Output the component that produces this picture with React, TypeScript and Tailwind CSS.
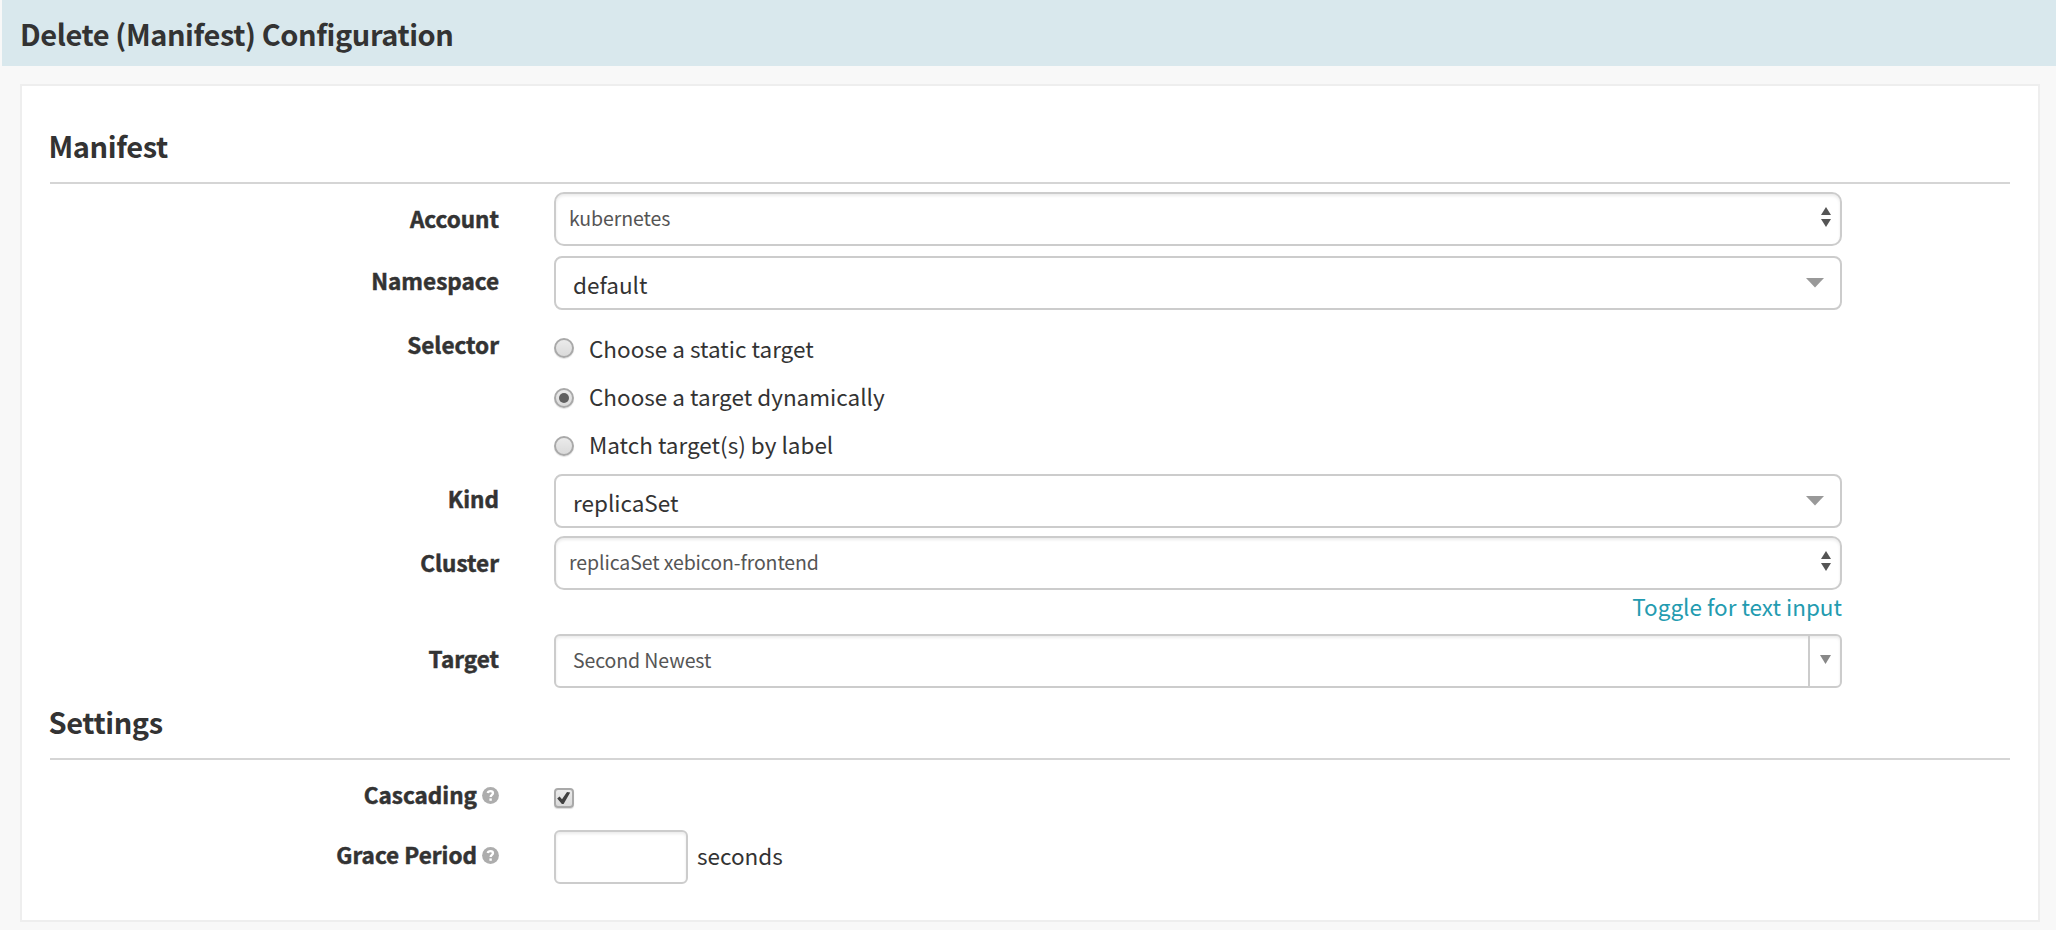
import type { ReactNode } from "react";

function SectionTitle({ children }: { children: ReactNode }) {
  return (
    <h2 className="h-[60px] border-b-2 border-[#d5d5d5] indent-[-1.5px] text-[29px] leading-[42px] font-bold tracking-[-0.4px]">
      {children}
    </h2>
  );
}

function HelpIcon() {
  return (
    <svg className="mt-[3px] ml-[5px] h-[17px] w-[17px] shrink-0" viewBox="0 0 17 17" aria-hidden="true">
      <circle cx="8.5" cy="8.5" r="8.4" fill="#adadad" />
      <path
        d="M5.7 6.1C6 4.8 7 4.2 8.5 4.2c1.6 0 2.5.8 2.5 2 0 1.7-2.4 1.8-2.4 3.9"
        fill="none"
        stroke="#fff"
        strokeWidth="2.3"
      />
      <rect x="7.4" y="11.4" width="2.4" height="2.4" fill="#fff" />
    </svg>
  );
}

function Label({ children, help, offset }: { children: ReactNode; help?: boolean; offset: string }) {
  return (
    <div
      className={`flex w-[449px] shrink-0 items-center justify-end text-[22.5px] leading-[30px] font-bold ${offset}`}
    >
      <span className="[-webkit-text-stroke:0.5px_#333]">{children}</span>
      {help && <HelpIcon />}
    </div>
  );
}

function Row({ label, help, offset = "pt-[9px]", className = "", children }: {
  label: string;
  help?: boolean;
  offset?: string;
  className?: string;
  children: ReactNode;
}) {
  return (
    <div className={`flex items-start ${className}`}>
      <Label help={help} offset={offset}>{label}</Label>
      <div className="ml-[55px] w-[1288px]">{children}</div>
    </div>
  );
}

function NativeSelect({ value }: { value: string }) {
  return (
    <div className="flex h-[54px] items-start justify-between rounded-[10px] border-2 border-[#ccc] bg-white pl-[13px] shadow-[inset_0_2px_3px_rgba(0,0,0,0.08)]">
      <span className="pt-[10px] text-[19.5px] leading-[28px] tracking-[-0.1px] text-[#555]">{value}</span>
      <svg className="mt-[13px] mr-[9px] h-[20px] w-[10px]" viewBox="0 0 10 20" fill="#555">
        <path d="M5 0l5 8H0zM5 20l5-8H0z" />
      </svg>
    </div>
  );
}

function SearchSelect({ value }: { value: string }) {
  return (
    <div className="flex h-[54px] items-start justify-between rounded-[8px] border-2 border-[#ccc] bg-white pl-[17px]">
      <span className="pt-[11px] text-[22.5px] leading-[30px]">{value}</span>
      <svg className="mt-[20px] mr-[16px] h-[10px] w-[18px]" viewBox="0 0 18 10" fill="#999">
        <path d="M0 0h18L9 9.5z" />
      </svg>
    </div>
  );
}

function ComboSelect({ value }: { value: string }) {
  return (
    <div className="flex h-[54px] items-stretch justify-between rounded-[6px] border-2 border-[#ccc] bg-white pl-[17px] shadow-[inset_0_2px_3px_rgba(0,0,0,0.08)]">
      <span className="pt-[10px] text-[19.5px] leading-[28px] tracking-[-0.1px] text-[#555]">{value}</span>
      <span className="flex w-[32px] justify-center border-l-2 border-[#ccc] pt-[19px]">
        <svg className="h-[9px] w-[11px]" viewBox="0 0 11 9" fill="#888">
          <path d="M0 0h11L5.5 9z" />
        </svg>
      </span>
    </div>
  );
}

function Radio({ label, checked, offset }: { label: string; checked?: boolean; offset: string }) {
  return (
    <div className="flex h-[48px] items-start">
      <span
        className={`flex h-[20px] w-[20px] items-center justify-center rounded-full border-2 border-[#a9a9a9] bg-linear-to-b from-[#ebebeb] to-[#dadada] shadow-[0_1px_1px_rgba(0,0,0,0.12)] ${offset}`}
      >
        {checked && <span className="h-[10px] w-[10px] rounded-full bg-[#606060]" />}
      </span>
      <span className="ml-[15px] pt-[9px] text-[22.5px] leading-[30px]">{label}</span>
    </div>
  );
}

function Checkbox() {
  return (
    <span className="flex h-[20px] w-[20px] items-center justify-center rounded-[4px] border-2 border-[#a9a9a9] bg-linear-to-b from-[#ebebeb] to-[#dadada] shadow-[0_1px_1px_rgba(0,0,0,0.15)]">
      <svg className="h-[16px] w-[16px]" viewBox="2 2 16 16">
        <path d="M3.2 10.6L5.6 8.6L8 11.2L13 3.9L16.2 4.6L9.6 16H7.9z" fill="#404040" />
      </svg>
    </span>
  );
}

export default function App() {
  return (
    <div className="h-[930px] w-[2056px] overflow-hidden bg-[#f8f8f8] pl-[2px] font-['Noto_Sans_CJK_SC','Noto_Sans',sans-serif] text-[#333]">
      <header className="h-[66px] bg-[#d9e8ed] pt-[12px] pl-[18px]">
        <h1 className="text-[29px] leading-[42px] font-bold tracking-[-0.42px]">
          Delete (Manifest) Configuration
        </h1>
      </header>

      <main className="mt-[18px] ml-[18px] h-[838px] w-[2020px] border-2 border-[#eee] bg-white px-[28px] pt-[38px]">
        <section>
          <SectionTitle>Manifest</SectionTitle>
          <Row label="Account" offset="pt-[11px]" className="mt-[8px]">
            <NativeSelect value="kubernetes" />
          </Row>
          <Row label="Namespace" className="mt-[10px]">
            <SearchSelect value="default" />
          </Row>
          <Row label="Selector" className="mt-[10px]">
            <div className="pt-[4px]">
              <Radio label="Choose a static target" offset="mt-[14px]" />
              <Radio label="Choose a target dynamically" checked offset="mt-[16px]" />
              <Radio label="Match target(s) by label" offset="mt-[16px]" />
            </div>
          </Row>
          <Row label="Kind" className="mt-[6px]">
            <SearchSelect value="replicaSet" />
          </Row>
          <Row label="Cluster" offset="pt-[11px]" className="mt-[8px]">
            <NativeSelect value="replicaSet xebicon-frontend" />
            <div className="h-[44px] text-right text-[22.5px] leading-[32px]">
              <a className="text-[#239bb0]">Toggle for text input</a>
            </div>
          </Row>
          <Row label="Target">
            <ComboSelect value="Second Newest" />
          </Row>
        </section>

        <section className="pt-[12px]">
          <SectionTitle>Settings</SectionTitle>
          <Row label="Cascading" help className="mt-[10px]">
            <div className="pt-[18px]">
              <Checkbox />
            </div>
          </Row>
          <Row label="Grace Period" help className="mt-[21px]">
            <div className="flex items-start">
              <div className="h-[54px] w-[134px] rounded-[6px] border-2 border-[#ccc] bg-white shadow-[inset_0_2px_3px_rgba(0,0,0,0.08)]" />
              <span className="ml-[9px] pt-[10px] text-[22.5px] leading-[30px]">seconds</span>
            </div>
          </Row>
        </section>
      </main>
    </div>
  );
}
